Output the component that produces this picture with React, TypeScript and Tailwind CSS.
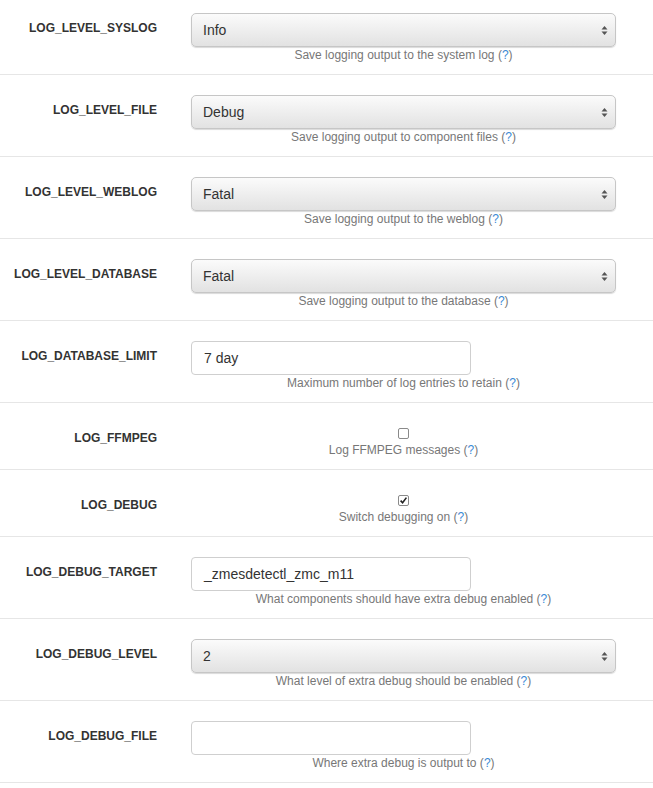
import type { ReactNode } from 'react';

type Row =
	| { kind: 'select'; name: string; value: string; help: string }
	| { kind: 'text'; name: string; value: string; help: string }
	| { kind: 'check'; name: string; checked: boolean; help: string };

const rows: Row[] = [
	{ kind: 'select', name: 'LOG_LEVEL_SYSLOG', value: 'Info', help: 'Save logging output to the system log' },
	{ kind: 'select', name: 'LOG_LEVEL_FILE', value: 'Debug', help: 'Save logging output to component files' },
	{ kind: 'select', name: 'LOG_LEVEL_WEBLOG', value: 'Fatal', help: 'Save logging output to the weblog' },
	{ kind: 'select', name: 'LOG_LEVEL_DATABASE', value: 'Fatal', help: 'Save logging output to the database' },
	{ kind: 'text', name: 'LOG_DATABASE_LIMIT', value: '7 day', help: 'Maximum number of log entries to retain' },
	{ kind: 'check', name: 'LOG_FFMPEG', checked: false, help: 'Log FFMPEG messages' },
	{ kind: 'check', name: 'LOG_DEBUG', checked: true, help: 'Switch debugging on' },
	{ kind: 'text', name: 'LOG_DEBUG_TARGET', value: '_zmesdetectl_zmc_m11', help: 'What components should have extra debug enabled' },
	{ kind: 'select', name: 'LOG_DEBUG_LEVEL', value: '2', help: 'What level of extra debug should be enabled' },
	{ kind: 'text', name: 'LOG_DEBUG_FILE', value: '', help: 'Where extra debug is output to' },
];

const SelectBox = ({ value }: { value: string }) => (
	<div className="flex h-[34px] w-full items-center justify-between rounded-[5px] border border-[#c6c6c6] bg-gradient-to-b from-[#fbfbfb] to-[#e2e2e2] pl-[11px] pr-[7px] shadow-[0_1px_1px_rgba(0,0,0,0.15)]">
		<span className="text-[14px] text-[#333]">{value}</span>
		<svg width="7" height="11" viewBox="0 0 7 11">
			<path d="M3.5 1 L6.5 4.6 L0.5 4.6 Z" fill="#555" />
			<path d="M3.5 10 L6.5 6.4 L0.5 6.4 Z" fill="#555" />
		</svg>
	</div>
);

const TextBox = ({ value }: { value: string }) => (
	<div className="flex h-[34px] w-[280px] items-center rounded-[4px] border border-[#cfcfcf] bg-white px-[12px] text-[14px] text-[#333]">
		{value}
	</div>
);

const CheckBox = ({ checked }: { checked: boolean }) => (
	<div className="flex justify-center pt-[5px]">
		<div className="flex h-[11px] w-[11px] items-center justify-center rounded-[2px] border border-[#8a8a8a] bg-white">
			{checked && (
				<svg width="9" height="9" viewBox="0 0 9 9">
					<path d="M1.6 4.6 L3.6 6.8 L7.4 1.6" fill="none" stroke="#222" strokeWidth="1.6" />
				</svg>
			)}
		</div>
	</div>
);

const Help = ({ children }: { children: ReactNode }) => (
	<p className="text-center text-[12px] leading-[16px] text-[#777]">
		{children} (<span className="text-[#3a8ad6]">?</span>)
	</p>
);

export default function App() {
	return (
		<div className="h-[788px] overflow-hidden bg-white font-['Liberation_Sans',Arial,sans-serif]">
			<div className="mt-[-7px]">
				{rows.map((r) => (
					<div key={r.name} className="flex border-b border-[#e6e6e6] pt-[20px] pb-[11px]">
						<div className="w-[157px] shrink-0 pt-[7px] text-right text-[12px] font-bold leading-[16px] text-[#333]">
							{r.name}
						</div>
						<div className="ml-[34px] w-[425px]">
							{r.kind === 'select' && <SelectBox value={r.value} />}
							{r.kind === 'text' && <TextBox value={r.value} />}
							{r.kind === 'check' && <CheckBox checked={r.checked} />}
							<div className={r.kind === 'check' ? 'pt-[3px]' : ''}>
								<Help>{r.help}</Help>
							</div>
						</div>
					</div>
				))}
			</div>
		</div>
	);
}
